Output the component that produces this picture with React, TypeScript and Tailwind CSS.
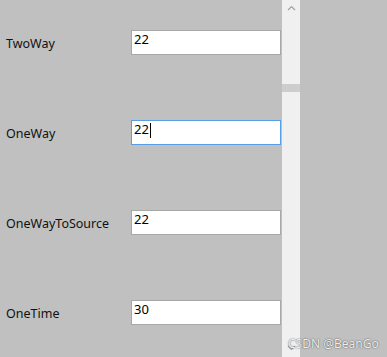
const rows = [
  { label: 'TwoWay', value: '22' },
  { label: 'OneWay', value: '22', focused: true },
  { label: 'OneWayToSource', value: '22' },
  { label: 'OneTime', value: '30' },
]

export default function App() {
  return (
    <div
      className="relative flex h-[357px] w-[387px] overflow-hidden bg-[#c0c0c0] text-[12.5px] text-[#111]"
      style={{ fontFamily: '"Noto Sans", "Liberation Sans", sans-serif' }}
    >
      <div className="flex w-[282px] flex-col gap-[65px] pt-[30px]">
        {rows.map((row) => (
          <div key={row.label} className="flex h-[25px] items-center">
            <div className="w-[131px] pl-[6px] pt-[4px] leading-none">{row.label}</div>
            <div
              className={
                row.focused
                  ? 'flex h-[25px] w-[150px] items-start border border-[#5a9ee8] bg-white pl-[2px] pt-[1px] text-[13px] leading-[14px] text-black'
                  : 'flex h-[25px] w-[150px] items-start border border-[#a8a8a8] bg-white pl-[2px] pt-[1px] text-[13px] leading-[14px] text-black'
              }
            >
              <span>{row.value}</span>
              {row.focused && <span className="ml-[1px] mt-[1px] h-[15px] w-px bg-black" />}
            </div>
          </div>
        ))}
      </div>

      <div className="flex w-[18px] flex-col bg-[#f0f0f0]">
        <div className="flex h-[84px] justify-center pt-[5px]">
          <svg width="9" height="6" viewBox="0 0 9 6">
            <path d="M1 5 L4.5 1.5 L8 5" fill="none" stroke="#a0a0a0" strokeWidth="1.2" />
          </svg>
        </div>
        <div className="h-[8px] bg-[#cdcdcd]" />
        <div className="flex flex-1 items-end justify-start pb-[6px] pl-[5px]">
          <svg width="9" height="6" viewBox="0 0 9 6">
            <path d="M1 1 L4.5 4.5 L8 1" fill="none" stroke="#a0a0a0" strokeWidth="1.2" />
          </svg>
        </div>
      </div>

      <div className="absolute left-[288px] top-[335px] text-[12px] text-[#ededed] [text-shadow:0_0_1.5px_rgba(0,0,0,0.75)]">
        CSDN @BeanGo
      </div>
    </div>
  )
}
